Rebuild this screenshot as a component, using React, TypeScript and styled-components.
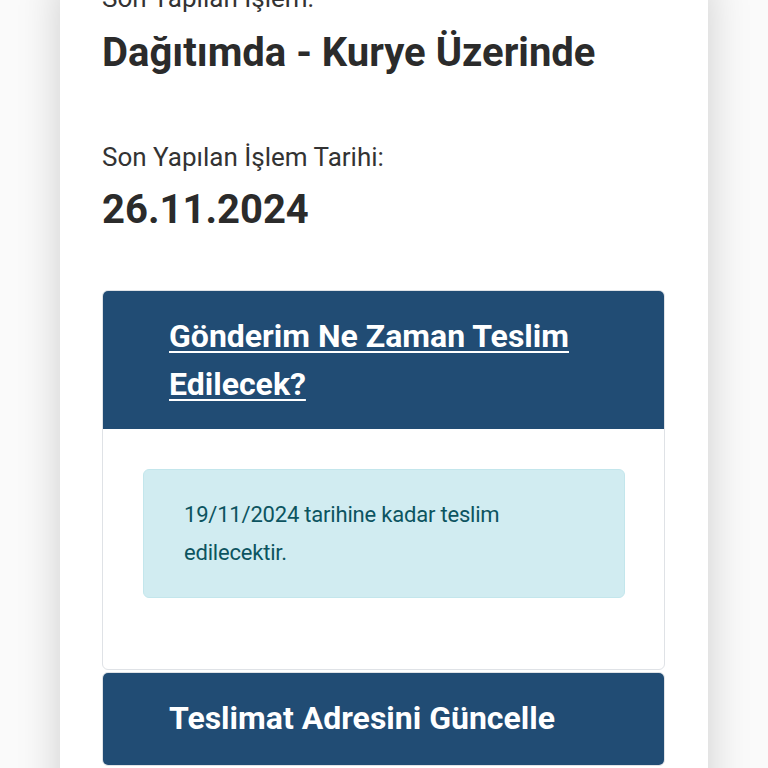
import styled, { createGlobalStyle } from "styled-components";

const GlobalStyle = createGlobalStyle`
  html, body {
    margin: 0;
    padding: 0;
    background: #fafafa;
    overflow: hidden;
  }
  body {
    font-family: Roboto, "Liberation Sans", Arial, sans-serif;
    color: #333;
  }
`;

const Page = styled.div`
  width: 768px;
  height: 768px;
  overflow: hidden;
`;

const Panel = styled.main`
  margin: -21px 0 0 60px;
  width: 648px;
  box-sizing: border-box;
  padding: 0 43px 40px 42px;
  background: #fff;
  box-shadow: 0 0 40px rgba(0, 0, 0, 0.18);
  min-height: 900px;
`;

const Label = styled.div<{ $top?: number }>`
  font-size: 26px;
  line-height: 39px;
  color: #333;
  margin-top: ${(p) => p.$top ?? 0}px;
`;

const Value = styled.div<{ $top?: number }>`
  font-size: 40px;
  line-height: 48px;
  font-weight: 700;
  color: #2b2b2b;
  margin-top: ${(p) => p.$top ?? 0}px;
`;

const Card = styled.section<{ $top?: number }>`
  margin-top: ${(p) => p.$top ?? 0}px;
  border: 1px solid #dfe2e6;
  border-radius: 6px;
  overflow: hidden;
  background: #fff;
`;

const CardHeader = styled.div<{ $pad: string }>`
  background: #214c74;
  padding: ${(p) => p.$pad};
`;

const HeaderLink = styled.a<{ $underline?: boolean }>`
  color: #fff;
  font-size: 32px;
  line-height: 48px;
  font-weight: 700;
  text-decoration: ${(p) => (p.$underline ? "underline" : "none")};
  text-underline-offset: 4px;
  text-decoration-thickness: 2px;
`;

const CardBody = styled.div`
  padding: 40px 39px 71px 40px;
`;

const Alert = styled.div`
  background: #d1ecf1;
  border: 1px solid #c3e6ec;
  border-radius: 6px;
  color: #0c5460;
  font-size: 22px;
  line-height: 38px;
  letter-spacing: -0.2px;
  padding: 26px 40px 25px 40px;
`;

export default function App() {
  return (
    <Page>
      <GlobalStyle />
      <Panel>
        <Label>Son Yapılan İşlem:</Label>
        <Value $top={11}>Dağıtımda - Kurye Üzerinde</Value>
        <Label $top={61}>Son Yapılan İşlem Tarihi:</Label>
        <Value $top={9}>26.11.2024</Value>
        <Card $top={56}>
          <CardHeader $pad="21px 66px 21px">
            <HeaderLink $underline href="#">
              Gönderim Ne Zaman Teslim Edilecek?
            </HeaderLink>
          </CardHeader>
          <CardBody>
            <Alert>19/11/2024 tarihine kadar teslim edilecektir.</Alert>
          </CardBody>
        </Card>
        <Card $top={2}>
          <CardHeader $pad="21px 66px 23px">
            <HeaderLink href="#">Teslimat Adresini Güncelle</HeaderLink>
          </CardHeader>
        </Card>
      </Panel>
    </Page>
  );
}
